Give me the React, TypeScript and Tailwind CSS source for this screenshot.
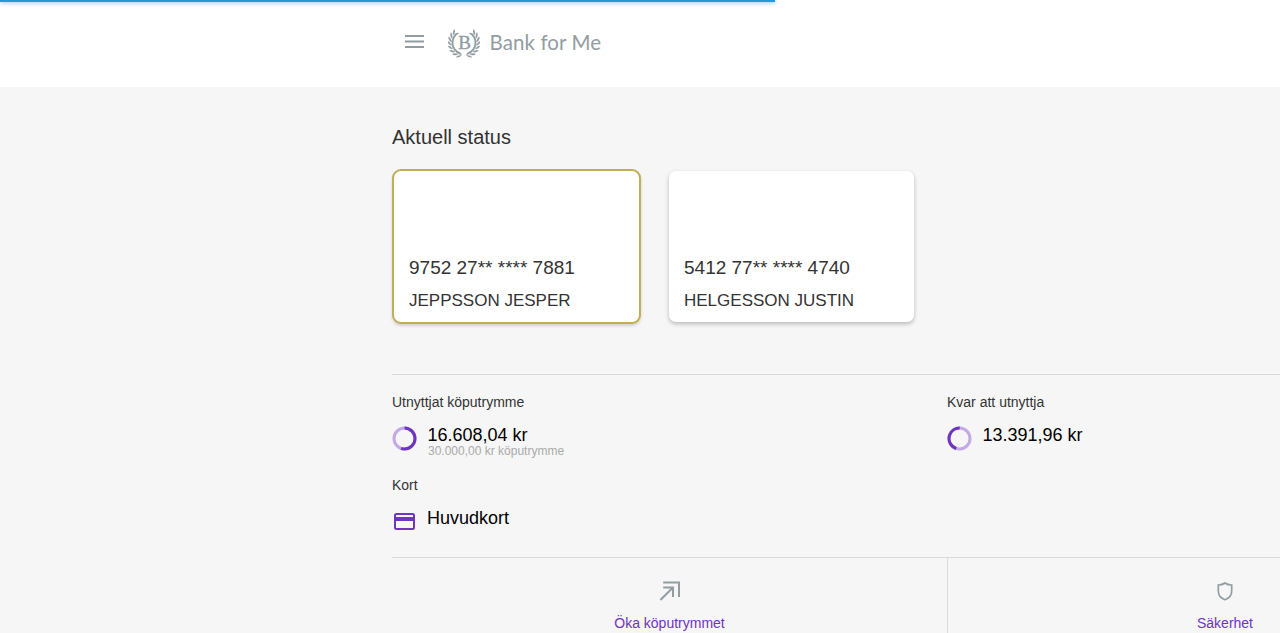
import React from "react";

function Laurel() {
  const leaves: React.ReactNode[] = [];
  for (let i = 0; i < 8; i++) {
    const deg = 102 + i * 16.5;
    const a = (deg * Math.PI) / 180;
    const cx = 16 + 12.9 * Math.cos(a);
    const cy = 14.6 + 12.9 * Math.sin(a);
    leaves.push(
      <g key={i} transform={`translate(${cx.toFixed(2)} ${cy.toFixed(2)}) rotate(${(deg + 92).toFixed(1)})`}>
        <path d="M-.5 0Q.6-3 4.800-3.300Q4-.3-.5 0Z" />
        <path d="M-.5 0Q.6 3 4.800 2.900Q4 .3-.5 0Z" />
      </g>
    );
  }
  return (
    <svg width="32" height="31" viewBox="0 0 32 31" fill="#929da2">
      <g>{leaves}</g>
      <g transform="translate(32 0) scale(-1 1)">{leaves}</g>
      <text x="16.5" y="20.6" textAnchor="middle" fontSize="19" fontFamily="'Liberation Serif', serif" stroke="#929da2" strokeWidth=".35">B</text>
    </svg>
  );
}

function Ring({ from, share }: { from: number; share: number }) {
  const length = 2 * Math.PI * 10.5;
  return (
    <svg width="25" height="25" viewBox="0 0 25 25" fill="none" strokeWidth="3">
      <circle cx="12.5" cy="12.5" r="10.5" stroke="#c3a9e5" />
      <circle cx="12.5" cy="12.5" r="10.5" stroke="#6e35bf" strokeDasharray={`${length * share} ${length}`} transform={`rotate(${from} 12.5 12.5)`} />
    </svg>
  );
}

function BankCard({ number, name, selected }: { number: string; name: string; selected?: boolean }) {
  return (
    <div
      className={
        selected
          ? "flex h-[155px] w-[249px] flex-col justify-end rounded-[9px] border-2 border-[#c1ae56] bg-white pb-[11px] pl-[15px] shadow-[0_2px_3px_rgba(0,0,0,0.15)]"
          : "mt-[2px] flex h-[151px] w-[245px] flex-col justify-end rounded-[7px] bg-white pb-[11px] pl-[15px] shadow-[0_2px_4px_rgba(0,0,0,0.25)]"
      }
    >
      <div className="text-[19px] leading-[22px] text-[#333]">{number}</div>
      <div className="mt-[12px] text-[17px] leading-[20px] text-[#333]">{name}</div>
    </div>
  );
}

export default function App() {
  return (
    <div className="relative h-[633px] w-full overflow-hidden bg-[#f6f6f6] font-['Liberation_Sans',Arial,sans-serif] text-[#333]">
      <div className="absolute top-0 left-0 h-[2px] w-[775px] bg-[#2299dd] shadow-[0_0_5px_#2299dd]" />
      <header className="flex h-[87px] items-start bg-white pl-[404px]">
        <svg className="mt-[34px]" width="21" height="16" viewBox="0 0 21 16" fill="#929da2">
          <path d="M1 1h19v2H1zM1 6.5h19v2H1zM1 12h19v2H1z" />
        </svg>
        <div className="mt-[28px] ml-[23px]"><Laurel /></div>
        <div className="mt-[28px] ml-[9.5px] font-['Lato',sans-serif] text-[20.5px] leading-[28px] tracking-[0.1px] whitespace-nowrap text-[#929da2]">Bank for Me</div>
      </header>
      <main className="ml-[392px] w-[1110px]">
        <h1 className="pt-[38px] text-[20px] leading-[24px] text-[#333]">Aktuell status</h1>
        <div className="mt-[20px] flex h-[155px] items-start gap-[28px]">
          <BankCard number="9752 27** **** 7881" name="JEPPSSON JESPER" selected />
          <BankCard number="5412 77** **** 4740" name="HELGESSON JUSTIN" />
        </div>
        <section className="mt-[50px] grid h-[183px] grid-cols-2 content-start border-t border-[#dadada]">
          <div className="h-[83px] pt-[19px]">
            <div className="text-[14px] leading-[16px]">Utnyttjat köputrymme</div>
            <div className="mt-[16px] flex">
              <Ring from={-90} share={0.55} />
              <div className="ml-[10.5px]">
                <div className="text-[18px] leading-[18px] text-black">16.608,04 kr</div>
                <div className="pl-[0.5px] text-[12px] leading-[14px] text-[#aaa]">30.000,00 kr köputrymme</div>
              </div>
            </div>
          </div>
          <div className="h-[83px] pt-[19px]">
            <div className="text-[14px] leading-[16px]">Kvar att utnyttja</div>
            <div className="mt-[16px] flex">
              <Ring from={108} share={0.45} />
              <div className="ml-[10.5px] text-[18px] leading-[18px] text-black">13.391,96 kr</div>
            </div>
          </div>
          <div className="pt-[19px]">
            <div className="text-[14px] leading-[16px]">Kort</div>
            <div className="mt-[16px] flex">
              <svg width="25" height="25" viewBox="0 0 25 25" fill="none" stroke="#6e35bf">
                <rect x="3" y="5" width="19" height="15" rx="1.5" strokeWidth="2" />
                <path d="M2 10h21" strokeWidth="4" />
              </svg>
              <div className="ml-[10px] text-[18px] leading-[18px] text-black">Huvudkort</div>
            </div>
          </div>
        </section>
        <nav className="grid h-[90px] grid-cols-2 border-t border-[#dadada] text-[14px] leading-[16px] text-[#6e35bf]">
          <div className="flex flex-col items-center pt-[22px]">
            <svg width="24" height="22" viewBox="0 0 24 22" fill="none" stroke="#929da2" strokeWidth="2">
              <path d="M5.200 2.500h15.800v14.500M5.200 7.500h9.800v9.500M15 7.500L2.400 20" />
            </svg>
            <span className="mt-[13px]">Öka köputrymmet</span>
          </div>
          <div className="flex flex-col items-center border-l border-[#dadada] pt-[22px]">
            <svg width="24" height="22" viewBox="0 0 24 22" fill="none" stroke="#929da2" strokeWidth="1.7">
              <path d="M12 3C10 4.5 7.500 5 5.300 5V11C5.300 15.500 8.500 18.500 12 19.700C15.500 18.500 18.700 15.500 18.700 11V5C16.500 5 14 4.500 12 3Z" />
            </svg>
            <span className="mt-[13px]">Säkerhet</span>
          </div>
        </nav>
      </main>
    </div>
  );
}
